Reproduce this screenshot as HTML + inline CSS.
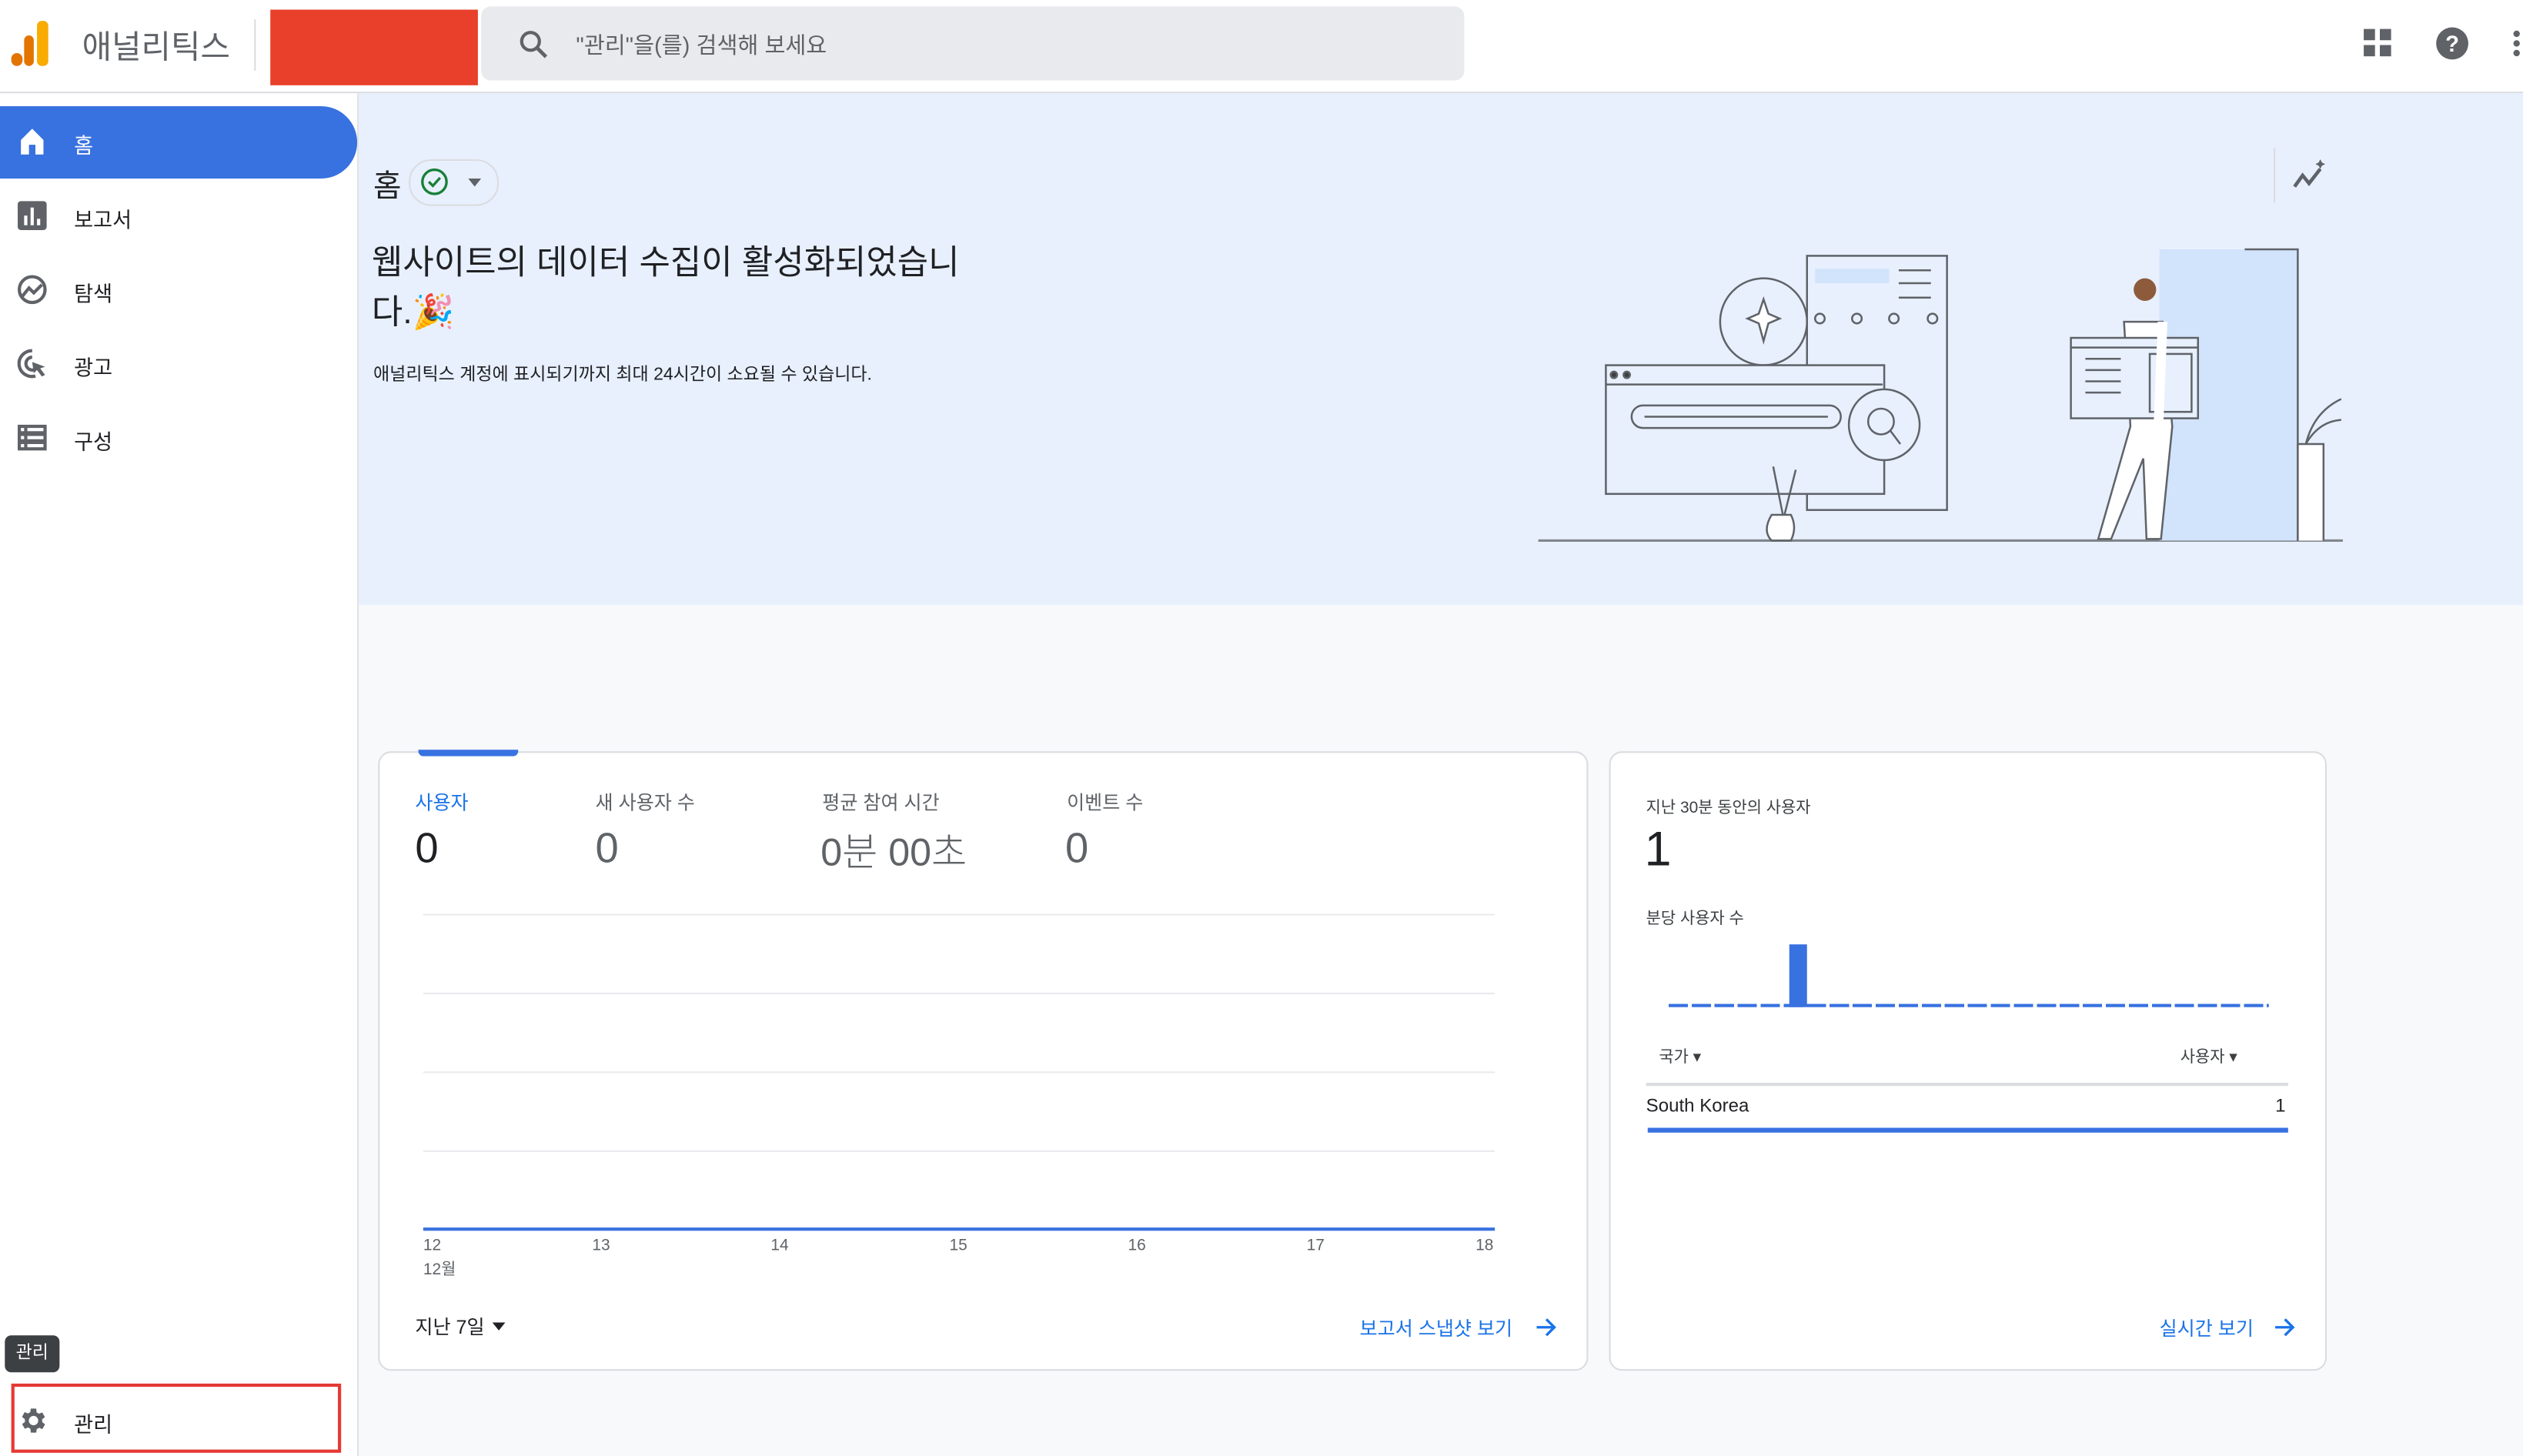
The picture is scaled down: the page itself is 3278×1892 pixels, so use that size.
<!DOCTYPE html>
<html><head><meta charset="utf-8"><style>
html,body{margin:0;padding:0;width:3278px;height:1892px;overflow:hidden;background:#fff}
#w{position:absolute;left:0;top:0;width:1568px;height:905px;transform:scale(2.0906);transform-origin:0 0;font-family:"Liberation Sans","Noto Sans CJK KR",sans-serif;color:#202124}
.a{position:absolute}
.nav{position:absolute;left:0;width:222px;height:44px;font-size:13px;color:#202124}
.nav span{position:absolute;left:46px;top:14px}
.nav svg{position:absolute;left:10px;top:12px}
.card{position:absolute;background:#fff;border:1px solid #dadce0;border-radius:8px}
.lbl{font-size:12px;color:#5f6368}
.big{font-size:26px;color:#5f6368;font-weight:300}
.gl{position:absolute;left:263px;width:666px;height:1px;background:#e8eaed}
.ax{position:absolute;top:769px;font-size:10px;color:#5f6368}
</style></head><body><div id="w">
<div class="a" style="left:0;top:0;width:1568px;height:57px;background:#fff;border-bottom:1px solid #dadce0"></div>
<div class="a" style="left:7px;top:33px;width:7px;height:8px;border-radius:4px;background:#e37400"></div>
<div class="a" style="left:15px;top:22px;width:6px;height:19px;border-radius:3px;background:#e37400"></div>
<div class="a" style="left:23px;top:13px;width:7px;height:28px;border-radius:3px;background:#f9ab00"></div>
<div class="a" style="left:51px;top:13px;font-size:20px;color:#5f6368">애널리틱스</div>
<div class="a" style="left:158px;top:12px;width:1px;height:32px;background:#dadce0"></div>
<div class="a" style="left:168px;top:6px;width:129px;height:47px;background:#e8402a"></div>
<div class="a" style="left:299px;top:4px;width:611px;height:46px;background:#e8eaed;border-radius:6px"></div>
<svg class="a" style="left:321px;top:17px" width="22" height="22" viewBox="0 0 24 24"><circle cx="9.5" cy="9.5" r="6" fill="none" stroke="#5f6368" stroke-width="2.2"/><path d="M14 14l6 6" stroke="#5f6368" stroke-width="2.5"/></svg>
<div class="a" style="left:358px;top:18px;font-size:14px;color:#5f6368">"관리"을(를) 검색해 보세요</div>
<svg class="a" style="left:1468px;top:17px" width="20" height="20" viewBox="0 0 20 20" fill="#5f6368"><rect x="1" y="1" width="7" height="7"/><rect x="11" y="1" width="7" height="7"/><rect x="1" y="11" width="7" height="7"/><rect x="11" y="11" width="7" height="7"/></svg>
<svg class="a" style="left:1513px;top:16px" width="22" height="22" viewBox="0 0 22 22"><circle cx="11" cy="11" r="10" fill="#5f6368"/><text x="11" y="16" font-size="14" font-weight="bold" fill="#fff" text-anchor="middle" font-family="Liberation Sans">?</text></svg>
<div class="a" style="left:1562px;top:19px;width:4px;height:4px;border-radius:2px;background:#5f6368;box-shadow:0 6px 0 #5f6368,0 12px 0 #5f6368"></div>

<div class="a" style="left:0;top:58px;width:222px;height:847px;background:#fff;border-right:1px solid #e0e0e0"></div>
<div class="a" style="left:0;top:66px;width:222px;height:45px;background:#3871e0;border-radius:0 23px 23px 0"></div>
<div class="nav" style="top:66px;color:#fff"><svg width="20" height="20" viewBox="0 0 20 20"><path d="M3 9L10 2l7 7v9h-5v-6H8v6H3z" fill="#fff"/></svg><span style="top:14px">홈</span></div>
<div class="nav" style="top:112px"><svg width="20" height="20" viewBox="0 0 20 20"><rect x="1" y="1" width="18" height="18" rx="2" fill="#5f6368"/><rect x="5" y="10" width="2" height="6" fill="#fff"/><rect x="9" y="5" width="2" height="11" fill="#fff"/><rect x="13" y="12" width="2" height="4" fill="#fff"/></svg><span>보고서</span></div>
<div class="nav" style="top:158px"><svg width="20" height="20" viewBox="0 0 20 20"><circle cx="10" cy="10" r="8" fill="none" stroke="#5f6368" stroke-width="2"/><path d="M4 14l4-5 3 3 5-5" fill="none" stroke="#5f6368" stroke-width="2"/></svg><span>탐색</span></div>
<div class="nav" style="top:204px"><svg width="20" height="20" viewBox="0 0 20 20"><path d="M10 2a8 8 0 1 0 2 15.7" fill="none" stroke="#5f6368" stroke-width="2"/><path d="M10 6a4 4 0 1 0 1 7.9" fill="none" stroke="#5f6368" stroke-width="2"/><path d="M10 9l8 3-3 1 3 4-2 1-3-4-2 2z" fill="#5f6368"/></svg><span>광고</span></div>
<div class="nav" style="top:250px"><svg width="20" height="20" viewBox="0 0 20 20" fill="#5f6368"><rect x="1" y="2" width="18" height="16"/><g fill="#fff"><rect x="3" y="4" width="2" height="2"/><rect x="7" y="4" width="10" height="2"/><rect x="3" y="9" width="2" height="2"/><rect x="7" y="9" width="10" height="2"/><rect x="3" y="14" width="2" height="2"/><rect x="7" y="14" width="10" height="2"/></g></svg><span>구성</span></div>
<div class="a" style="left:3px;top:830px;width:34px;height:23px;background:#3c4043;border-radius:4px;color:#fff;font-size:11px;text-align:center;line-height:23px">관리</div>
<div class="a" style="left:7px;top:860px;width:201px;height:39px;border:2px solid #e53935"></div>
<svg class="a" style="left:10px;top:873px" width="20" height="20" viewBox="0 0 24 24"><path fill="#5f6368" d="M19.4 13a7.5 7.5 0 0 0 0-2l2.1-1.6-2-3.5-2.5 1a7 7 0 0 0-1.7-1L15 3h-4l-.4 2.7a7 7 0 0 0-1.7 1l-2.5-1-2 3.5L6.6 11a7.5 7.5 0 0 0 0 2l-2.1 1.6 2 3.5 2.5-1a7 7 0 0 0 1.7 1L11 21h4l.4-2.7a7 7 0 0 0 1.7-1l2.5 1 2-3.5zM13 15.5a3.5 3.5 0 1 1 0-7 3.5 3.5 0 0 1 0 7z"/></svg>
<div class="a" style="left:46px;top:875px;font-size:13px">관리</div>

<div class="a" style="left:223px;top:58px;width:1345px;height:847px;background:#f8f9fa"></div>
<div class="a" style="left:223px;top:58px;width:1345px;height:318px;background:#e8f0fe"></div>
<div class="a" style="left:232px;top:101px;font-size:19px">홈</div>
<div class="a" style="left:254px;top:99px;width:54px;height:27px;border:1px solid #dadce0;border-radius:14px"></div>
<svg class="a" style="left:261px;top:104px" width="18" height="18" viewBox="0 0 18 18"><circle cx="9" cy="9" r="7.5" fill="none" stroke="#188038" stroke-width="1.6"/><path d="M5.5 9l2.5 2.5 4.5-5" fill="none" stroke="#188038" stroke-width="1.6"/></svg>
<div class="a" style="left:291px;top:111px;border:4px solid transparent;border-top:5px solid #5f6368"></div>
<div class="a" style="left:231px;top:148px;font-size:21px;line-height:31px;width:390px;color:#202124">웹사이트의 데이터 수집이 활성화되었습니<br>다.🎉</div>
<div class="a" style="left:232px;top:224px;font-size:11px">애널리틱스 계정에 표시되기까지 최대 24시간이 소요될 수 있습니다.</div>
<div class="a" style="left:1413px;top:92px;width:1px;height:34px;background:#dadce0"></div>
<svg class="a" style="left:1424px;top:99px" width="24" height="20" viewBox="0 0 24 20"><path d="M2 17l5-7 4 5 7-9" fill="none" stroke="#5f6368" stroke-width="2.2"/><path d="M18 0l1 2 2 1-2 1-1 2-1-2-2-1 2-1z" fill="#5f6368"/></svg>
<svg class="a" style="left:950px;top:150px" width="510" height="192" viewBox="950 150 510 192" fill="none" stroke="#5f6368" stroke-width="1.2">
<line x1="956" y1="336" x2="1456" y2="336" stroke="#80868b" stroke-width="1.5"/>
<rect x="1123" y="159" width="87" height="158" fill="#e8f0fe"/>
<rect x="1128" y="167" width="46" height="9" fill="#d2e3fc" stroke="none"/>
<path d="M1180 168h20M1180 176h20M1180 185h20"/>
<circle cx="1131" cy="198" r="3"/><circle cx="1154" cy="198" r="3"/><circle cx="1177" cy="198" r="3"/><circle cx="1201" cy="198" r="3"/>
<circle cx="1096" cy="200" r="27" fill="#e8f0fe"/>
<path d="M1096 186l3 9 7 3-7 3-3 11-3-11-7-3 7-3z" fill="#fff"/>
<rect x="998" y="227" width="173" height="80" fill="#e8f0fe"/>
<line x1="998" y1="239" x2="1170" y2="239"/>
<circle cx="1003" cy="233" r="2" fill="#3c4043"/><circle cx="1011" cy="233" r="2" fill="#3c4043"/>
<rect x="1014" y="252" width="130" height="14" rx="7"/><line x1="1022" y1="259" x2="1136" y2="259"/>
<circle cx="1171" cy="264" r="22" fill="#e8f0fe"/><circle cx="1169" cy="262" r="8"/><line x1="1175" y1="268" x2="1181" y2="276"/>
<path d="M1101 320q-6 10 0 16h12q4-8 0-16z" fill="#fff"/><path d="M1108 320l-6-30M1109 320l7-28"/>
<rect x="1342" y="155" width="86" height="181" fill="#d2e3fc" stroke="none"/><path d="M1395 155h33v181"/>
<path d="M1428 336v-60h16v60" fill="#fff"/><path d="M1433 276q5-20 22-28M1433 276q8-14 22-15"/>
<circle cx="1333" cy="180" r="7" fill="#8d5a3b" stroke="none"/>
<path d="M1320 200h24l6 65-7 70h-9l-2-50-20 50h-8l20-70z" fill="#fff"/>
<rect x="1287" y="210" width="79" height="50" fill="#e8f0fe"/><line x1="1287" y1="216" x2="1366" y2="216"/><rect x="1336" y="220" width="26" height="36"/><path d="M1296 223h22M1296 230h22M1296 237h22M1296 244h22"/>
<path d="M1344 200l-4 100" stroke="#fff" stroke-width="6"/>
</svg>

<div class="card" style="left:235px;top:467px;width:750px;height:383px"></div>
<div class="a" style="left:260px;top:466px;width:62px;height:4px;background:#3871e0;border-radius:0 0 3px 3px"></div>
<div class="a lbl" style="left:258px;top:490px;color:#1a73e8">사용자</div>
<div class="a big" style="left:258px;top:512px;color:#202124">0</div>
<div class="a lbl" style="left:370px;top:490px">새 사용자 수</div>
<div class="a big" style="left:370px;top:512px">0</div>
<div class="a lbl" style="left:511px;top:490px">평균 참여 시간</div>
<div class="a big" style="left:510px;top:510px;font-size:24px">0분 00초</div>
<div class="a lbl" style="left:663px;top:490px">이벤트 수</div>
<div class="a big" style="left:662px;top:512px">0</div>
<div class="gl" style="top:568px"></div><div class="gl" style="top:617px"></div><div class="gl" style="top:666px"></div><div class="gl" style="top:715px"></div>
<div class="a" style="left:263px;top:763px;width:666px;height:2px;background:#3871e0"></div>
<div class="ax" style="left:263px">12<br>12월</div><div class="ax" style="left:368px">13</div><div class="ax" style="left:479px">14</div><div class="ax" style="left:590px">15</div><div class="ax" style="left:701px">16</div><div class="ax" style="left:812px">17</div><div class="ax" style="left:917px">18</div>
<div class="a" style="left:258px;top:816px;font-size:12px">지난 7일</div>
<div class="a" style="left:306px;top:822px;border:4px solid transparent;border-top:5px solid #202124"></div>
<div class="a" style="left:845px;top:817px;font-size:12px;color:#1a73e8">보고서 스냅샷 보기</div>
<svg class="a" style="left:954px;top:818px" width="14" height="14" viewBox="0 0 14 14"><path d="M1 7h11M7 2l5 5-5 5" fill="none" stroke="#1a73e8" stroke-width="1.6"/></svg>

<div class="card" style="left:1000px;top:467px;width:444px;height:383px"></div>
<div class="a" style="left:1023px;top:493px;font-size:10px;color:#3c4043">지난 30분 동안의 사용자</div>
<div class="a" style="left:1022px;top:512px;font-size:30px">1</div>
<div class="a" style="left:1023px;top:562px;font-size:10px;color:#3c4043">분당 사용자 수</div>
<div class="a" style="left:1037px;top:624px;width:373px;height:2px;background:repeating-linear-gradient(90deg,#3871e0 0 12px,transparent 12px 14.3px)"></div>
<div class="a" style="left:1112px;top:587px;width:11px;height:39px;background:#3871e0"></div>
<div class="a" style="left:1031px;top:648px;font-size:10px;color:#3c4043">국가 ▾</div>
<div class="a" style="left:1355px;top:648px;font-size:10px;color:#3c4043">사용자 ▾</div>
<div class="a" style="left:1023px;top:673px;width:399px;height:2px;background:#dadce0"></div>
<div class="a" style="left:1023px;top:682px;font-size:11.5px">South Korea</div>
<div class="a" style="left:1414px;top:682px;font-size:11.5px">1</div>
<div class="a" style="left:1024px;top:701px;width:398px;height:3px;background:#3871e0"></div>
<div class="a" style="left:1342px;top:817px;font-size:12px;color:#1a73e8">실시간 보기</div>
<svg class="a" style="left:1413px;top:818px" width="14" height="14" viewBox="0 0 14 14"><path d="M1 7h11M7 2l5 5-5 5" fill="none" stroke="#1a73e8" stroke-width="1.6"/></svg>
</div></body></html>
